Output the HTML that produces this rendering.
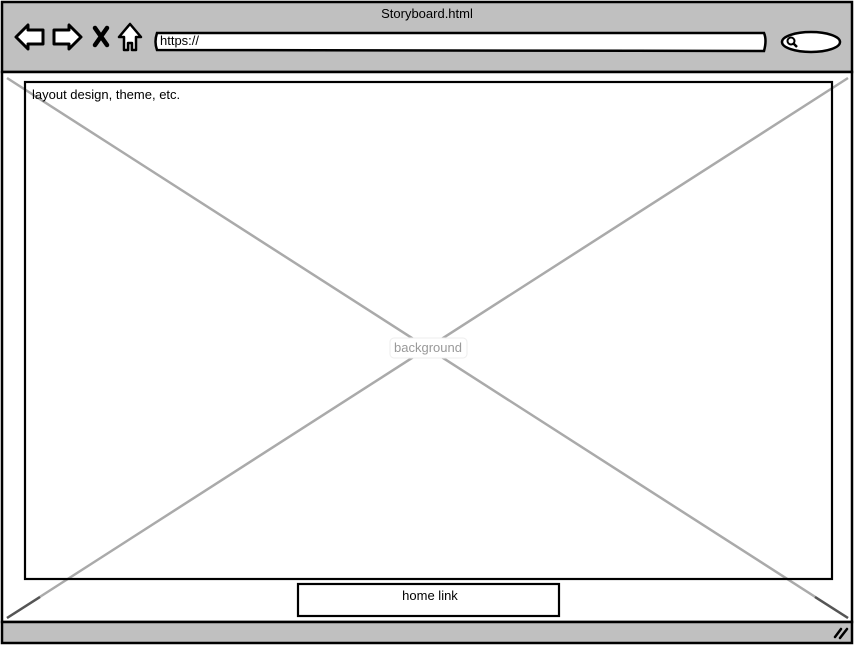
<!DOCTYPE html>
<html><head><meta charset="utf-8"><style>
html,body{margin:0;padding:0;background:#fff;}
svg{display:block;}
text{font-family:"Liberation Sans",sans-serif;}
</style></head><body>
<svg width="854" height="646" viewBox="0 0 854 646" xmlns="http://www.w3.org/2000/svg">
<rect x="0" y="0" width="854" height="646" fill="#fff"/>
<rect x="2" y="2" width="850" height="70" fill="#c0c0c0" stroke="#000" stroke-width="2.5"/>
<text x="427" y="18" font-size="13" text-anchor="middle" fill="#000">Storyboard.html</text>
<path d="M16 37 L28 25 L28 30 L43 30 L43 44 L28 44 L28 49 Z" fill="#fff" stroke="#000" stroke-width="3" stroke-linejoin="round"/>
<path d="M81 37 L69 25 L69 30 L54 30 L54 44 L69 44 L69 49 Z" fill="#fff" stroke="#000" stroke-width="3" stroke-linejoin="round"/>
<path d="M95 28 L107 45 M107 28 L95 45" stroke="#000" stroke-width="4.5" stroke-linecap="round"/>
<path d="M130 24 L119 37 L124 37 L124 50 L128 50 L128 43 L132 43 L132 50 L136 50 L136 37 L141 37 Z" fill="#fff" stroke="#000" stroke-width="2.5" stroke-linejoin="round"/>
<path d="M157 33 L764 33 Q767 40 764 51 L157 50 Q154 42 157 33 Z" fill="#fff" stroke="#000" stroke-width="2.5"/>
<text x="160" y="45" font-size="13" fill="#000">https://</text>
<ellipse cx="811" cy="42" rx="29" ry="10" fill="#fff" stroke="#000" stroke-width="2.5"/>
<circle cx="791" cy="41" r="3.5" fill="none" stroke="#000" stroke-width="2"/>
<path d="M793 43 L797 47" stroke="#000" stroke-width="2.5"/>
<rect x="2" y="72" width="850" height="550" fill="#fff" stroke="#000" stroke-width="2.5"/>
<line x1="7" y1="78" x2="848" y2="618" stroke="#aaa" stroke-width="2.5"/>
<line x1="848" y1="78" x2="7" y2="618" stroke="#aaa" stroke-width="2.5"/>
<line x1="7" y1="618" x2="40" y2="597" stroke="#555" stroke-width="2.5"/>
<line x1="848" y1="618" x2="815" y2="597" stroke="#555" stroke-width="2.5"/>
<rect x="25" y="82" width="807" height="497" fill="none" stroke="#000" stroke-width="2.2"/>
<text x="32" y="99" font-size="13" fill="#000">layout design, theme, etc.</text>
<rect x="390" y="338" width="77" height="20" rx="4" fill="#fff" stroke="#eee" stroke-width="1"/>
<text x="428" y="352" font-size="13" text-anchor="middle" fill="#999">background</text>
<rect x="298" y="584" width="261" height="32" fill="#fff" stroke="#000" stroke-width="2.2"/>
<text x="430" y="600" font-size="13" text-anchor="middle" fill="#000">home link</text>
<rect x="2" y="622" width="850" height="21" fill="#c0c0c0" stroke="#000" stroke-width="2.5"/>
<path d="M835 637 L841 629 M840 638 L847 629" stroke="#000" stroke-width="2.5" stroke-linecap="round"/>
</svg>
</body></html>
